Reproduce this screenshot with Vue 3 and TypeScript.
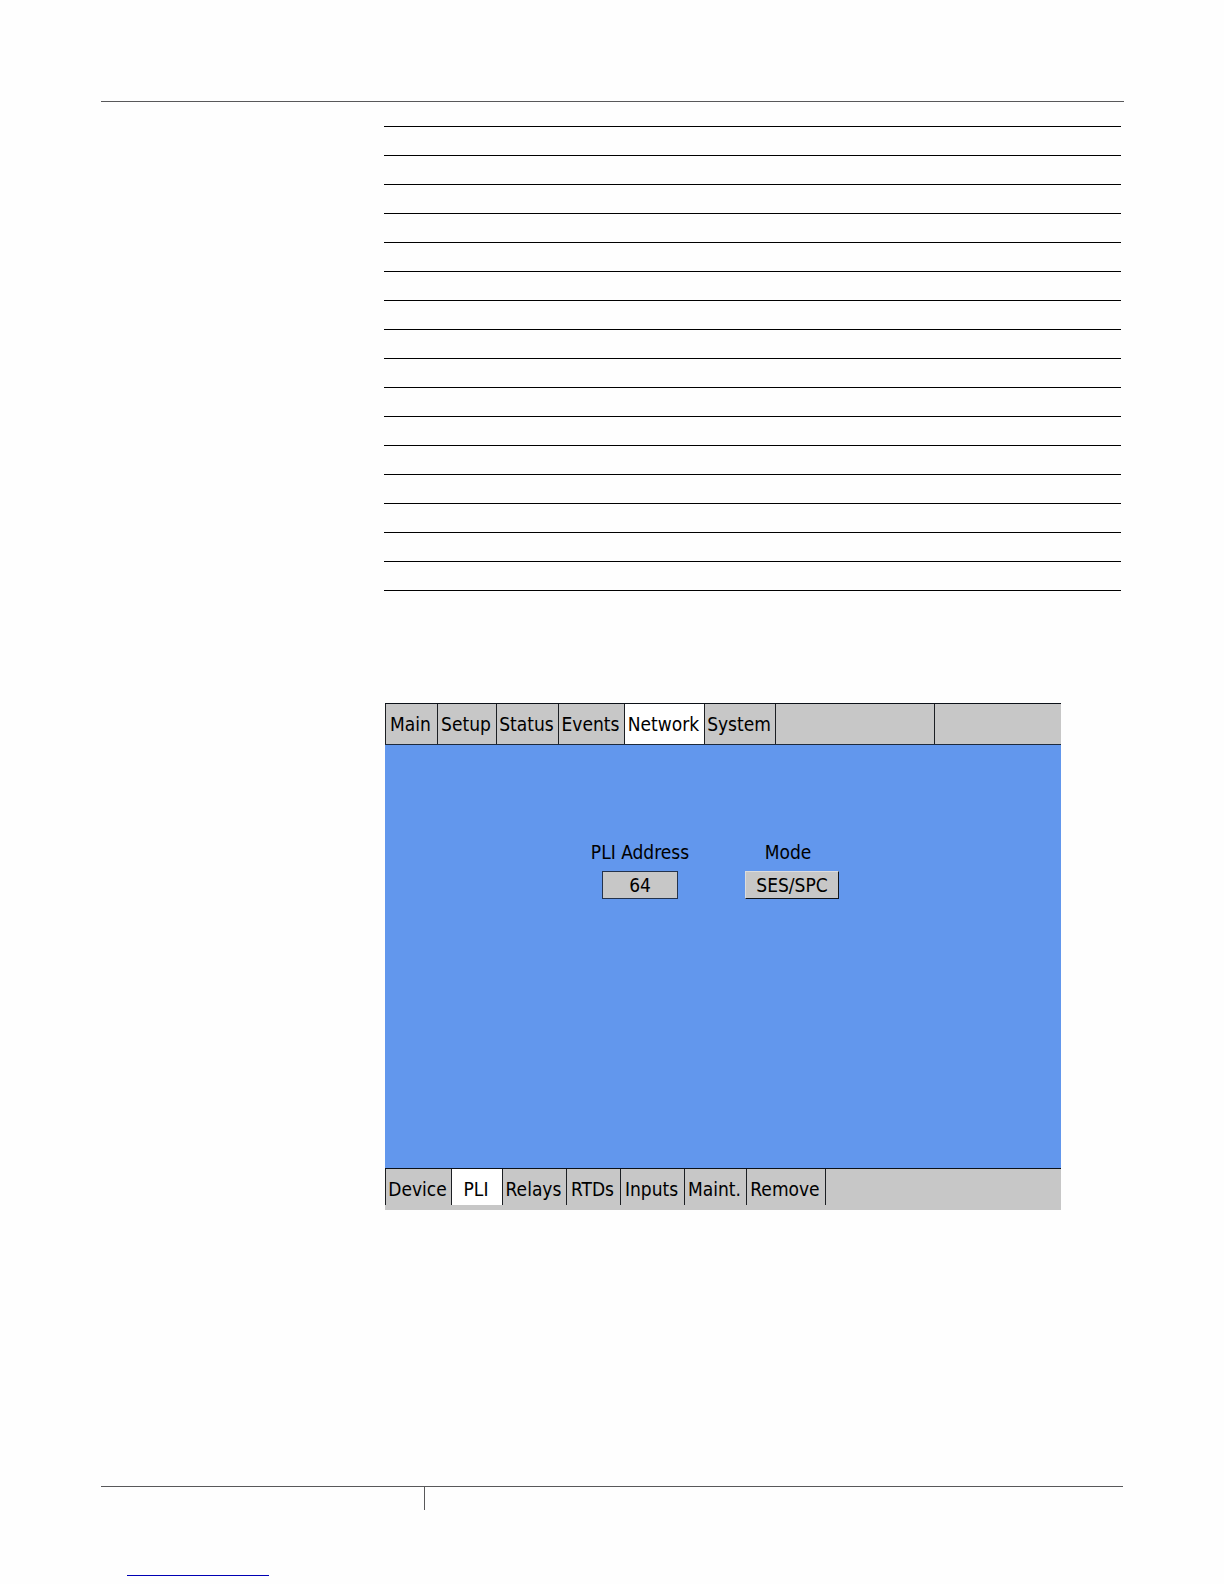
<script setup lang="ts">
import { ref } from 'vue'

interface Tab {
  label: string
  width: number
}

const ruleCount = 17

const topTabs: Tab[] = [
  { label: 'Main', width: 52 },
  { label: 'Setup', width: 59 },
  { label: 'Status', width: 62 },
  { label: 'Events', width: 66 },
  { label: 'Network', width: 80 },
  { label: 'System', width: 71 },
]

const bottomTabs: Tab[] = [
  { label: 'Device', width: 66 },
  { label: 'PLI', width: 51 },
  { label: 'Relays', width: 64 },
  { label: 'RTDs', width: 54 },
  { label: 'Inputs', width: 64 },
  { label: 'Maint.', width: 62 },
  { label: 'Remove', width: 79 },
]

const activeTop = ref('Network')
const activeBottom = ref('PLI')
const address = ref('64')
const modes = ['SES/SPC']
const modeIndex = ref(0)

function nextMode(): void {
  modeIndex.value = (modeIndex.value + 1) % modes.length
}
</script>

<template>
  <div class="page">
    <header class="page-head"></header>

    <main class="column">
      <div class="rules">
        <div v-for="n in ruleCount" :key="n" class="rule"></div>
      </div>

      <section class="device">
        <nav class="tabs top">
          <button
            v-for="tab in topTabs"
            :key="tab.label"
            type="button"
            class="tab"
            :class="{ active: tab.label === activeTop }"
            :style="{ width: tab.width + 'px' }"
            @click="activeTop = tab.label"
          >{{ tab.label }}</button>
          <div class="blank"></div>
          <div class="blank status"></div>
        </nav>

        <div class="panel">
          <div class="field">
            <label for="pli-address">PLI Address</label>
            <input id="pli-address" v-model="address" class="value" type="text" />
          </div>
          <div class="field mode">
            <label for="pli-mode">Mode</label>
            <button id="pli-mode" class="toggle" type="button" @click="nextMode">{{ modes[modeIndex] }}</button>
          </div>
        </div>

        <nav class="tabs bottom">
          <button
            v-for="tab in bottomTabs"
            :key="tab.label"
            type="button"
            class="tab"
            :class="{ active: tab.label === activeBottom }"
            :style="{ width: tab.width + 'px' }"
            @click="activeBottom = tab.label"
          >{{ tab.label }}</button>
          <div class="blank"></div>
        </nav>
      </section>
    </main>

    <footer class="page-foot">
      <div class="divider"></div>
    </footer>
    <div class="underline"></div>
  </div>
</template>

<style>
body {
  margin: 0;
  background: #fefefe;
}
</style>

<style scoped>
.page {
  box-sizing: border-box;
  padding: 101px 100px 8px 101px;
  font-family: "DejaVu Sans Condensed", "DejaVu Sans", sans-serif;
  font-size: 19px;
  line-height: 24px;
  color: #000;
}

.page-head {
  border-top: 1px solid #58585a;
}

.column {
  padding: 24px 3px 0 283px;
}

.rules {
  display: flex;
  flex-direction: column;
  gap: 28px;
}

.rule {
  border-top: 1px solid #000;
}

.device {
  max-width: 676px;
  margin-top: 112px;
  margin-left: 1px;
  background: #6297ed;
}

.tabs {
  display: flex;
  box-sizing: border-box;
  background: #c7c7c7;
  border-top: 1px solid #0c1118;
}

.top {
  height: 42px;
  border-bottom: 1px solid #1d2a3c;
}

.bottom {
  height: 42px;
  padding-bottom: 5px;
}

.tab {
  flex: none;
  box-sizing: border-box;
  padding: 0 2px 0 0;
  border: 0;
  border-left: 1px solid #1c1f23;
  border-radius: 0;
  background: #c7c7c7;
  color: inherit;
  font: inherit;
  text-align: center;
  white-space: nowrap;
}

.bottom .tab {
  padding-top: 4px;
}

.tab.active {
  background: #fff;
}

.blank {
  flex: 1;
  border-left: 1px solid #1c1f23;
}

.blank.status {
  flex: none;
  width: 126px;
}

.panel {
  display: flex;
  gap: 50px;
  box-sizing: border-box;
  height: 423px;
  padding: 95px 0 0 204px;
}

.field {
  display: flex;
  flex-direction: column;
  align-items: center;
  gap: 7px;
  width: 102px;
}

.field label {
  white-space: nowrap;
}

.field.mode label {
  padding-right: 8px;
}

.value,
.toggle {
  box-sizing: border-box;
  height: 28px;
  margin: 0;
  padding: 0;
  border: 1px solid #23324c;
  border-radius: 0;
  background: #c7c7c7;
  color: inherit;
  font: inherit;
  text-align: center;
}

.value {
  width: 76px;
}

.toggle {
  width: 94px;
  border-color: #dcdcdc #10151c #10151c #dcdcdc;
}

.page-foot {
  margin-top: 276px;
  margin-right: 1px;
  border-top: 1px solid #58585a;
}

.divider {
  height: 23px;
  margin-left: 323px;
  border-left: 1px solid #58585a;
}

.underline {
  width: 142px;
  margin: 65px 0 0 26px;
  border-top: 1px solid #0000b4;
}
</style>
